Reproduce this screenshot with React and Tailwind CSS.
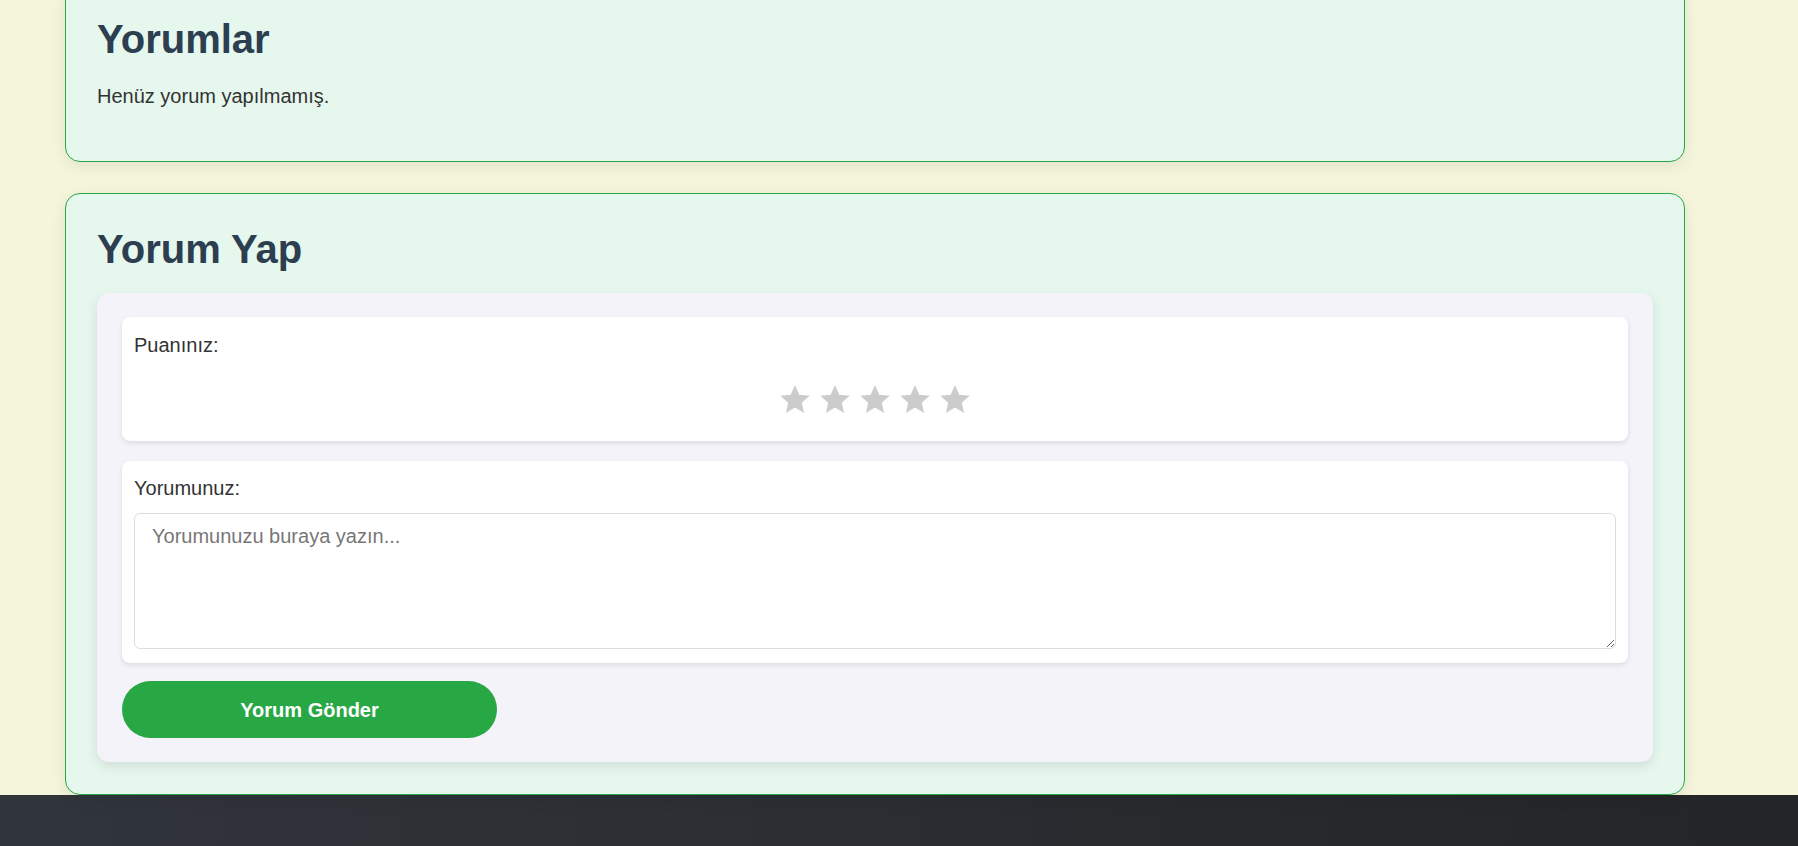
import React, { useState } from "react";

const Star = ({ filled }) => (
  <svg viewBox="2 2 20 19.02" className="w-[30px] h-[28px]" aria-hidden="true">
    <polygon
      points="12,2 14.9,8.6 22,9.27 16.6,14 18.18,21.02 12,17.3 5.82,21.02 7.4,14 2,9.27 9.1,8.6"
      fill={filled ? "#f5b301" : "#cccccc"}
    />
  </svg>
);

export default function App() {
  const [rating, setRating] = useState(0);
  const [text, setText] = useState("");

  return (
    <div
      className="h-[846px] overflow-hidden bg-[#f5f5dc] text-[#333]"
      style={{ fontFamily: '"Liberation Sans", Arial, sans-serif' }}
    >
      <main className="flex flex-col">
        {/* Yorumlar */}
        <section className="ml-[65px] w-[1620px] mt-[-17px] bg-[#e6f7ee] border border-[#28a745] rounded-[15px] shadow-[0_4px_15px_rgba(0,0,0,0.08)] px-[31px] pt-[31px] pb-[50px]">
          <h2 className="text-[40px] leading-[48px] font-bold text-[#2c3e50] mb-[18px]">Yorumlar</h2>
          <p className="text-[20px] leading-[30px] text-[#333]">Henüz yorum yapılmamış.</p>
        </section>

        {/* Yorum Yap */}
        <section className="ml-[65px] w-[1620px] mt-[31px] bg-[#e6f7ee] border border-[#28a745] rounded-[15px] shadow-[0_4px_15px_rgba(0,0,0,0.08)] px-[31px] pt-[31px] pb-[32px]">
          <h2 className="text-[40px] leading-[48px] font-bold text-[#2c3e50] mb-[20px]">Yorum Yap</h2>

          <div className="bg-[#f3f3f9] rounded-[12px] shadow-[0_4px_12px_rgba(0,0,0,0.1)] px-[25px] pt-[24px] pb-[24px]">
            <div className="bg-white rounded-[8px] shadow-[0_2px_5px_rgba(0,0,0,0.1)] px-[12px] pt-[13px] pb-[28px]">
              <label className="block text-[20px] leading-[30px] text-[#333]">Puanınız:</label>
              <div className="flex justify-center gap-[10px] mt-[25px]">
                {[1, 2, 3, 4, 5].map((n) => (
                  <button key={n} type="button" onClick={() => setRating(n)} className="cursor-pointer">
                    <Star filled={n <= rating} />
                  </button>
                ))}
              </div>
            </div>

            <div className="mt-[20px] bg-white rounded-[8px] shadow-[0_2px_5px_rgba(0,0,0,0.1)] px-[12px] pt-[12px] pb-[14px]">
              <label className="block text-[20px] leading-[30px] text-[#333] mb-[10px]">Yorumunuz:</label>
              <textarea
                value={text}
                onChange={(e) => setText(e.target.value)}
                placeholder="Yorumunuzu buraya yazın..."
                className="block w-full h-[136px] border border-[#ddd] rounded-[6px] px-[17px] py-[11px] text-[20px] leading-[23px] text-[#333] placeholder:text-[#777] bg-white outline-none"
                style={{ fontFamily: '"Liberation Sans", Arial, sans-serif' }}
              />
            </div>

            <button
              type="button"
              className="mt-[18px] w-[375px] h-[57px] rounded-full bg-[#28a745] text-white text-[20px] font-bold"
            >
              Yorum Gönder
            </button>
          </div>
        </section>
      </main>

      <footer className="h-[200px] bg-[linear-gradient(to_right,#31353c,#232526)]" />
    </div>
  );
}
